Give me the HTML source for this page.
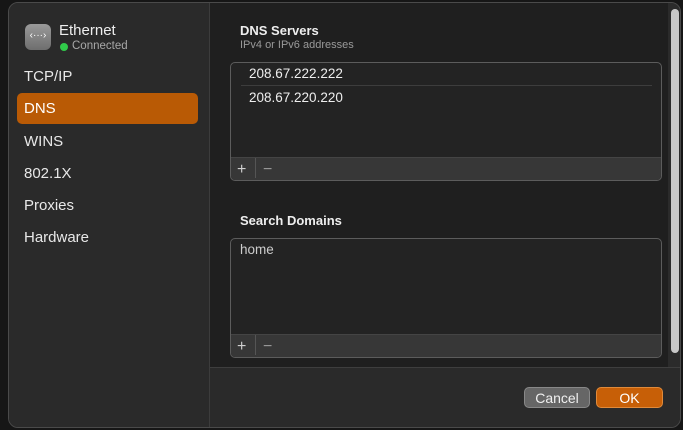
<!DOCTYPE html>
<html><head><style>
body{margin:0;width:683px;height:430px;background:#161616;font-family:"Liberation Sans",sans-serif;position:relative;overflow:hidden;color:#e6e6e6}
.win{position:absolute;left:8px;top:2px;width:673px;height:426px;border-radius:10px;background:#282828;border:1px solid #4a4a4a;box-sizing:border-box;overflow:hidden}
.side{position:absolute;left:0;top:0;width:200px;height:100%;background:#2a2a2a;border-right:1px solid #3c3c3c}
.main{position:absolute;left:201px;top:0;width:458px;height:364px;background:#1f1f1f}
.scroll{position:absolute;left:659px;top:0;width:14px;height:364px;background:#2b2b2b}
.thumb{position:absolute;left:3px;top:6px;width:8px;height:344px;border-radius:4px;background:#c8c8c8}
.foot{position:absolute;left:201px;top:364px;right:0;bottom:0;background:#2a2a2a;border-top:1px solid #3e3e3e}
.item{position:absolute;left:15px;font-size:15px;color:#e8e8e8}
.sel{position:absolute;left:8px;top:90px;width:181px;height:31px;border-radius:5px;background:#b95a05}
.box{position:absolute;width:430px;border:1px solid #5c5c5c;border-radius:5px;background:#232323;overflow:hidden}
.bar{position:absolute;left:0;right:0;bottom:0;height:22px;background:#373737;border-top:1px solid #444}
.bar span{position:absolute;top:3px;font-size:16px;color:#cfcfcf}
.btn{position:absolute;top:384px;height:21px;border-radius:5px;font-size:14px;text-align:center;line-height:21px;box-sizing:border-box}
</style></head><body>
<div class="win">
<div class="side">
 <div style="position:absolute;left:16px;top:21px;width:26px;height:26px;border-radius:6px;background:linear-gradient(#9a9a9a,#6e6e6e);color:#fff;font-size:10px;text-align:center;line-height:24px">‹···›</div>
 <div style="position:absolute;left:50px;top:19px;font-size:15px;color:#eee">Ethernet</div>
 <div style="position:absolute;left:51px;top:40px;width:8px;height:8px;border-radius:50%;background:#30c94a"></div>
 <div style="position:absolute;left:63px;top:37px;font-size:11.5px;color:#a8a8a8">Connected</div>
 <div class="item" style="top:65px">TCP/IP</div>
 <div class="sel"></div>
 <div class="item" style="top:97px;color:#fff">DNS</div>
 <div class="item" style="top:130px">WINS</div>
 <div class="item" style="top:162px">802.1X</div>
 <div class="item" style="top:194px">Proxies</div>
 <div class="item" style="top:226px">Hardware</div>
</div>
<div class="main">
 <div style="position:absolute;left:30px;top:20px;font-size:13px;font-weight:bold;color:#eee">DNS Servers</div>
 <div style="position:absolute;left:30px;top:36px;font-size:11px;color:#9a9a9a">IPv4 or IPv6 addresses</div>
 <div class="box" style="left:20px;top:59px;height:117px">
  <div style="position:absolute;left:18px;top:3px;font-size:13.5px;color:#eee">208.67.222.222</div>
  <div style="position:absolute;left:10px;right:9px;top:22px;height:1px;background:#3d3d3d"></div>
  <div style="position:absolute;left:18px;top:27px;font-size:13.5px;color:#eee">208.67.220.220</div>
  <div class="bar"><span style="left:6px">+</span><span style="left:24px;top:0;width:1px;height:20px;background:#555"></span><span style="left:32px;color:#999">−</span></div>
 </div>
 <div style="position:absolute;left:30px;top:210px;font-size:13px;font-weight:bold;color:#eee">Search Domains</div>
 <div class="box" style="left:20px;top:235px;height:118px">
  <div style="position:absolute;left:9px;top:3px;font-size:13.5px;color:#ccc">home</div>
  <div class="bar"><span style="left:6px">+</span><span style="left:24px;top:0;width:1px;height:20px;background:#555"></span><span style="left:32px;color:#999">−</span></div>
 </div>
</div>
<div class="scroll"><div class="thumb"></div></div>
<div class="foot"></div>
<div class="btn" style="left:515px;width:66px;background:#666;border:1px solid #888;color:#f0f0f0">Cancel</div>
<div class="btn" style="left:587px;width:67px;background:#c75f07;border:1px solid #e08a3a;color:#fff">OK</div>
</div>
</body></html>
